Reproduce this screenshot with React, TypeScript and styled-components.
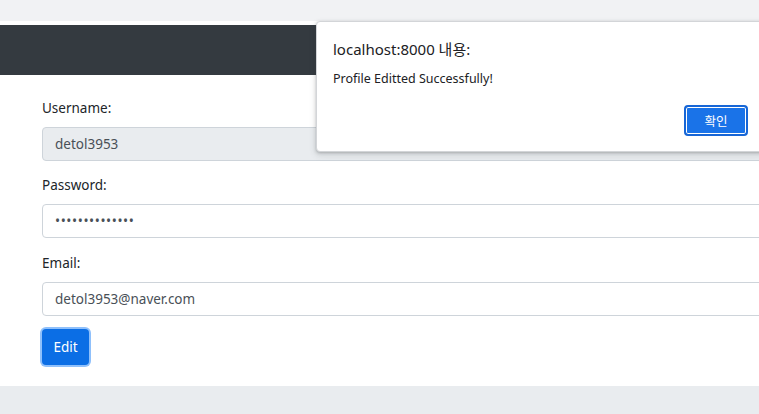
import React from "react";
import styled, { createGlobalStyle } from "styled-components";

const Global = createGlobalStyle`
  html, body { margin: 0; padding: 0; }
  body {
    width: 759px;
    height: 414px;
    overflow: hidden;
    background: #e9ecef;
    font-family: "Noto Sans", "Open Sans", sans-serif;
  }
`;

const Page = styled.div`
  position: relative;
  width: 759px;
  height: 414px;
  overflow: hidden;
  display: flex;
  flex-direction: column;
`;

const TopStrip = styled.div`
  height: 21px;
  background: #f1f2f4;
  border-bottom: 4px solid #ffffff;
`;

const NavBar = styled.div`
  height: 50px;
  background: #343a40;
`;

const Main = styled.main`
  background: #ffffff;
  padding: 23px 0 21px 42px;
`;

const Form = styled.form`
  width: 760px;
  display: flex;
  flex-direction: column;
`;

const Group = styled.div<{ $gap?: number }>`
  display: flex;
  flex-direction: column;
  margin-bottom: ${(p) => p.$gap ?? 14}px;
`;

const Label = styled.label`
  font-size: 13.5px;
  line-height: 21px;
  color: #212529;
  margin-bottom: 8px;
`;

const Input = styled.input<{ $disabled?: boolean; $secret?: boolean }>`
  box-sizing: border-box;
  height: 34px;
  width: 100%;
  padding: 0 12px;
  border: 1px solid #ced4da;
  border-radius: 4px;
  font-family: "Noto Sans", "Open Sans", sans-serif;
  font-size: 13.5px;
  letter-spacing: ${(p) => (p.$secret ? "0.6px" : "0")};
  color: #495057;
  background: ${(p) => (p.$disabled ? "#e9ecef" : "#ffffff")};
  outline: none;
`;

const PrimaryButton = styled.button`
  align-self: flex-start;
  width: 47px;
  height: 36px;
  border: none;
  border-radius: 4px;
  background: #0b6ee5;
  color: #ffffff;
  font-family: "Noto Sans", "Open Sans", sans-serif;
  font-size: 13.5px;
  padding: 0;
  box-shadow: 0 0 0 2px #8fc0fb;
`;

const Footer = styled.div`
  flex: 1;
  background: #e9ecef;
`;

const Dialog = styled.div`
  position: absolute;
  left: 316px;
  top: 21px;
  width: 449px;
  height: 131px;
  box-sizing: border-box;
  background: #ffffff;
  border-radius: 4px;
  border: 1px solid #d3d5d8;
  box-shadow: 0 1px 3px rgba(60, 64, 67, 0.3), 0 3px 6px 1px rgba(60, 64, 67, 0.12);
  padding: 16px 16px 0 16px;
  display: flex;
  flex-direction: column;
  color: #202124;
`;

const DialogTitle = styled.div`
  font-family: "Noto Sans", "Noto Sans CJK KR", sans-serif;
  font-size: 15px;
  line-height: 22px;
`;

const DialogMessage = styled.div`
  font-family: "Noto Sans", "Noto Sans CJK KR", sans-serif;
  font-size: 12.5px;
  line-height: 18px;
  margin-top: 10px;
`;

const DialogActions = styled.div`
  display: flex;
  justify-content: flex-end;
  margin-top: 17px;
`;

const DialogButton = styled.button`
  box-sizing: border-box;
  width: 64px;
  height: 31px;
  border-radius: 4px;
  border: 2px solid #1766d6;
  box-shadow: inset 0 0 0 1px #ffffff;
  background: #1a73e8;
  color: #ffffff;
  font-family: "Noto Sans CJK KR", sans-serif;
  font-size: 12.5px;
  padding: 0;
`;

export default function App() {
  return (
    <>
      <Global />
      <Page>
        <TopStrip />
        <NavBar />
        <Main>
          <Form onSubmit={(e) => e.preventDefault()}>
            <Group>
              <Label>Username:</Label>
              <Input $disabled readOnly value="detol3953" />
            </Group>
            <Group $gap={15}>
              <Label>Password:</Label>
              <Input $secret type="password" readOnly value="detol3953detol" />
            </Group>
            <Group $gap={13}>
              <Label>Email:</Label>
              <Input readOnly value="detol3953@naver.com" />
            </Group>
            <PrimaryButton type="button">Edit</PrimaryButton>
          </Form>
        </Main>
        <Footer />
        <Dialog>
          <DialogTitle>localhost:8000 내용:</DialogTitle>
          <DialogMessage>Profile Editted Successfully!</DialogMessage>
          <DialogActions>
            <DialogButton type="button">확인</DialogButton>
          </DialogActions>
        </Dialog>
      </Page>
    </>
  );
}
